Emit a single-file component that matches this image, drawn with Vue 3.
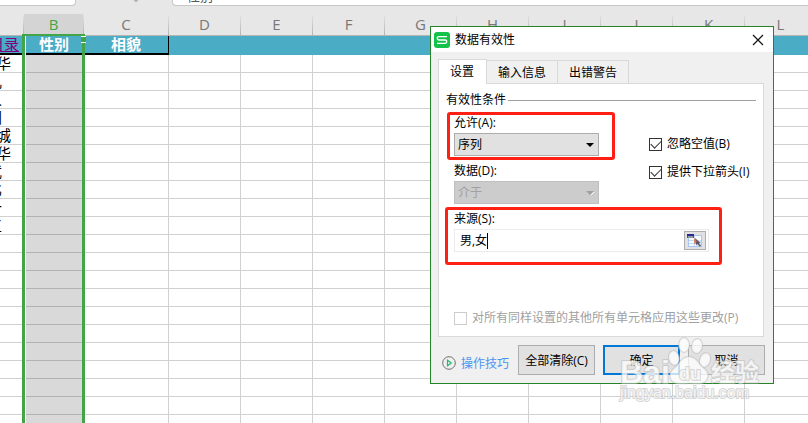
<script setup>
import { ref } from 'vue'

const columns = ['A', 'B', 'C', 'D', 'E', 'F', 'G', 'H', 'I', 'J', 'K', 'L', 'M', 'N', 'O', 'P']
const widths = { A: 24, B: 60, C: 85 }
const headings = { A: '目录', B: '性别', C: '相貌' }
const names = [
  { text: '华' }, { text: '儿', cut: true }, { text: '人', cut: true }, { text: '国', cut: true },
  { text: '城' }, { text: '华' }, { text: '武', cut: true }, { text: '比', cut: true },
  { text: '十', cut: true }, { text: '工', cut: true },
]
const rowCount = 60

const allow = ref('序列')
const operator = ref('介于')
const source = ref('男,女')
const ignoreBlank = ref(true)
const showArrow = ref(true)
const applyAll = ref(false)
</script>

<template>
  <main class="app">
    <div class="formula-bar">
      <div class="name-box"></div>
      <div class="knob"></div>
      <div class="formula">性别</div>
    </div>

    <div class="sheet">
      <table>
        <colgroup>
          <col v-for="c in columns" :key="c" :style="{ width: (widths[c] || 72) + 'px' }" />
        </colgroup>
        <thead>
          <tr>
            <th v-for="c in columns" :key="c" class="letter" :class="{ picked: c === 'B' }" scope="col">
              <span>{{ c === 'A' ? '' : c }}</span>
            </th>
          </tr>
        </thead>
        <tbody>
          <tr class="headings">
            <td v-for="c in columns" :key="c" :class="{ filled: headings[c], last: c === 'C' }">
              <div v-if="c === 'A'" class="name linked"><a href="#">{{ headings.A }}</a></div>
              <template v-else>{{ headings[c] }}</template>
            </td>
          </tr>
          <tr v-for="r in rowCount" :key="r" class="row">
            <td v-for="c in columns" :key="c" :class="{ shaded: c === 'B', first: c === 'A' }">
              <div v-if="c === 'A' && names[r - 1]" class="name" :class="{ cut: names[r - 1].cut }">
                <span>{{ names[r - 1].text }}</span>
              </div>
            </td>
          </tr>
        </tbody>
      </table>
      <div class="selection"></div>
      <div class="handle"></div>
    </div>

    <section class="dialog" role="dialog" aria-labelledby="dialog-title">
      <header class="title-bar">
        <svg class="logo" viewBox="0 0 16 16" aria-hidden="true">
          <rect width="16" height="16" rx="3" fill="#12c24a" />
          <path d="M13 4.700H5q-1.800 0-1.800 1.600T5 8h6q1.800 0 1.800 1.600T11 11.300H3" fill="none" stroke="#fff" stroke-width="1.300" />
        </svg>
        <h1 id="dialog-title">数据有效性</h1>
        <button class="close" type="button" aria-label="关闭">
          <svg viewBox="0 0 12 12"><path d="M1 1l10 10M11 1L1 11" stroke="#111" stroke-width="1.2" /></svg>
        </button>
      </header>

      <div class="tabs" role="tablist">
        <button class="tab active" type="button" role="tab" aria-selected="true">设置</button>
        <button class="tab" type="button" role="tab" aria-selected="false">输入信息</button>
        <button class="tab" type="button" role="tab" aria-selected="false">出错警告</button>
      </div>

      <div class="panel">
        <h2>有效性条件</h2>
        <div class="conditions">
          <div class="fields">
            <div class="field">
              <label for="allow">允许(A):</label>
              <div class="picker">
                <select id="allow" v-model="allow"><option>序列</option></select>
                <svg viewBox="0 0 8 4"><path d="M0 0h8L4 4z" fill="#000" /></svg>
              </div>
            </div>
            <div class="field">
              <label for="operator">数据(D):</label>
              <div class="picker">
                <select id="operator" v-model="operator" disabled><option>介于</option></select>
                <svg viewBox="0 0 8 4"><path d="M8.500 .5L5 4" stroke="#fff" /><path d="M0 0h8L4 4z" fill="#a0a0a0" /></svg>
              </div>
            </div>
          </div>
          <div class="options">
            <label class="check"><input v-model="ignoreBlank" type="checkbox" />忽略空值(B)</label>
            <label class="check"><input v-model="showArrow" type="checkbox" />提供下拉箭头(I)</label>
          </div>
        </div>
        <div class="field source">
          <label for="source">来源(S):</label>
          <div class="range">
            <input id="source" v-model="source" type="text" />
            <span class="caret"></span>
            <button type="button" aria-label="选择区域">
              <svg viewBox="0 0 16 14">
                <rect x="1.500" y="1.500" width="13" height="11" fill="#f8fbff" stroke="#a5c8f5" />
                <path d="M2 6.500h12M2 9.500h12M7.500 2v10" stroke="#c3d8f5" />
                <path d="M9 6h5v6H9z" fill="#cfdffa" />
                <rect x="0" y="0" width="7" height="4" fill="#555a70" />
                <rect x="0" y="0" width="7" height="2" fill="#252a90" />
                <path d="M1 3h5" stroke="#d8d8e0" />
                <path d="M8 4l5.500 5-1.700.3 2.200 2.500-1.200 1-2.200-2.800L9 11z" fill="#5d5563" />
                <path d="M7.200 4v6l2.600-2.500z" fill="#d5774a" />
              </svg>
            </button>
          </div>
        </div>
        <label class="check muted"><input v-model="applyAll" type="checkbox" disabled />对所有同样设置的其他所有单元格应用这些更改(P)</label>
      </div>

      <footer class="actions">
        <a class="tips" href="#">
          <svg viewBox="0 0 14 14" aria-hidden="true">
            <circle cx="7" cy="7" r="6.300" fill="none" stroke="#707070" />
            <path d="M5.500 4.200v5.600L9.300 7z" fill="none" stroke="#27b775" stroke-width="1.200" />
          </svg>
          操作技巧
        </a>
        <button class="push" type="button">全部清除(C)</button>
        <button class="push primary" type="button">确定</button>
        <button class="push" type="button">取消</button>
      </footer>

      <div class="mark mark-allow"></div>
      <div class="mark mark-source"></div>

      <svg class="watermark" viewBox="0 0 150 70" aria-hidden="true">
        <g fill="#fff" fill-opacity=".75" stroke="#bdbdbd" stroke-opacity=".6" stroke-width="2" stroke-linejoin="round" paint-order="stroke">
          <text x="3" y="47" font-size="32" font-weight="700">Bai</text>
          <ellipse cx="57" cy="22" rx="5" ry="7" transform="rotate(-12 57 22)" />
          <ellipse cx="67" cy="9" rx="5" ry="7" />
          <ellipse cx="80" cy="10" rx="5" ry="7" transform="rotate(8 80 10)" />
          <ellipse cx="88" cy="24" rx="5" ry="7" transform="rotate(18 88 24)" />
          <path d="M72 21c7 0 9 6 13 10 5 4 7 7 5 12-3 6-12 4-18 4s-15 2-18-4c-2-5 0-8 5-12 4-4 6-10 13-10z" />
          <text x="62" y="44" font-size="18" font-weight="700">du</text>
          <text x="94" y="45" font-size="24" font-weight="700">经验</text>
          <text x="3" y="62" font-size="16">jingyan.baidu.com</text>
        </g>
      </svg>
    </section>
  </main>
</template>

<style>
body {
  margin: 0;
}
</style>

<style scoped>
* {
  box-sizing: border-box;
}
.app {
  position: relative;
  display: flex;
  flex-direction: column;
  height: 100vh;
  overflow: hidden;
  background: #e7e7e7;
  color: #000;
  font-family: 'Open Sans', 'Noto Sans CJK SC', sans-serif;
  font-size: 12px;
}
button,
input,
select {
  margin: 0;
  font: inherit;
  color: inherit;
}

/* formula bar */
.formula-bar {
  display: flex;
  flex: none;
  height: 6px;
}
.name-box {
  width: 76px;
  background: #fff;
  border: solid #c8c8c8;
  border-width: 0 1px 1px 0;
  border-radius: 0 0 4px 0;
}
.knob {
  width: 4px;
  height: 2px;
  margin: 0 34px 0 58px;
  background: #b0b0b0;
  border-radius: 0 0 2px 2px;
}
.formula {
  display: flex;
  flex: 1;
  align-items: flex-end;
  padding: 0 0 1px 14px;
  overflow: hidden;
  background: #fff;
  border: solid #c8c8c8;
  border-width: 0 0 1px 1px;
  border-radius: 0 0 0 4px;
  color: #555;
  font-size: 13px;
  line-height: 16px;
}

/* sheet */
.sheet {
  position: relative;
  flex: 1;
  overflow: hidden;
}
table {
  table-layout: fixed;
  width: 1105px;
  border-collapse: separate;
  border-spacing: 0;
  font-size: 15px;
}
th,
td {
  padding: 0;
  text-align: center;
  overflow: hidden;
}
.letter {
  height: 30px;
  padding-top: 8px;
  border-bottom: 1px solid #b4b4b4;
  color: #777;
  font-weight: 400;
  line-height: 21px;
}
.letter span {
  display: block;
  height: 21px;
  border: solid;
  border-width: 0 1px 0 0;
  border-image: linear-gradient(#e7e7e7, #b0b0b0) 1;
}
.letter.picked {
  color: #43a547;
}
.picked span {
  background: #d4d4d4;
}
.headings td {
  height: 19px;
  background: #4bacc6;
  color: #fff;
  font-weight: 700;
  line-height: 17px;
}
.headings .filled {
  border-bottom: 2px solid #000;
}
.headings .last {
  border-right: 1px solid #000;
}
.row td {
  height: 18px;
  background: #fff;
  border: solid #d0d0d0;
  border-width: 0 1px 1px 0;
  line-height: 17px;
}
.row .first {
  border-right-color: #fff;
}
.row .shaded {
  background: #d9d9d9;
  border-color: #b2b2b2;
}
.name {
  display: flex;
  justify-content: flex-end;
  height: 17px;
  padding-right: 12px;
  overflow: hidden;
}
.name.cut {
  padding-right: 21px;
}
.name.linked {
  padding-right: 5px;
  font-weight: 400;
}
.name span,
.name a {
  flex: none;
}
.name a {
  color: #800080;
}
.selection {
  position: absolute;
  top: 28px;
  bottom: -4px;
  left: 22px;
  width: 63px;
  border: 3px solid #43a547;
  border-top-width: 2px;
  box-shadow: inset 1px 0 #fff;
}
.handle {
  position: absolute;
  top: 30px;
  left: 81px;
  width: 5px;
  height: 7px;
  background: #43a547;
  border: solid #fff;
  border-width: 1px 0;
}

/* dialog */
.dialog {
  position: absolute;
  top: 26px;
  left: 430px;
  width: 344px;
  background: #f0f0f0;
  border: 1px solid #27832b;
}
.title-bar {
  display: flex;
  align-items: center;
  gap: 5px;
  height: 25px;
  padding: 0 9px 0 3px;
  background: #fff;
}
.logo {
  width: 16px;
  height: 16px;
}
h1 {
  flex: 1;
  margin: 0;
  font-size: 12px;
  font-weight: 400;
  line-height: 24px;
}
.close {
  display: flex;
  padding: 0;
  background: none;
  border: 0;
}
.close svg {
  width: 12px;
  height: 12px;
}
.tabs {
  position: relative;
  display: flex;
  align-items: flex-end;
  margin: 7px 7px -1px;
}
.tab {
  height: 24px;
  padding: 0 11px;
  background: #f0f0f0;
  border: solid #d9d9d9;
  border-width: 1px 1px 1px 0;
  line-height: 24px;
}
.tab.active {
  height: 25px;
  padding: 0 12px 0 11px;
  background: #fff;
  border-width: 1px 1px 0;
}
.panel {
  margin: 0 9px 0 7px;
  padding: 7px 7px 10px;
  background: #fff;
  border: 1px solid #d9d9d9;
}
h2 {
  display: flex;
  align-items: center;
  gap: 2px;
  margin: 0 0 6px;
  font-size: 12px;
  font-weight: 400;
  line-height: 18px;
}
h2::after {
  flex: 1;
  height: 1px;
  background: #a0a0a0;
  content: '';
}
.conditions {
  display: grid;
  grid-template-columns: 145px 1fr;
  gap: 50px;
  margin: 0 0 7px 8px;
}
.fields,
.field {
  display: flex;
  flex-direction: column;
}
.fields {
  gap: 7px;
}
.field {
  gap: 2px;
  line-height: 16px;
}
.picker {
  display: grid;
  align-items: center;
}
.picker > * {
  grid-area: 1 / 1;
}
.picker svg {
  justify-self: end;
  width: 8px;
  height: 4px;
  margin-right: 5px;
  pointer-events: none;
}
select {
  width: 100%;
  height: 23px;
  padding: 0 3px;
  appearance: none;
  background: #e1e1e1;
  border: 1px solid #adadad;
  border-radius: 0;
}
select:disabled {
  background: #ccc;
  border-color: #bfbfbf;
  color: #a0a0a0;
  opacity: 1;
}
.options {
  display: flex;
  flex-direction: column;
  gap: 12px;
  padding-top: 21px;
}
.check {
  display: flex;
  align-items: center;
  gap: 5px;
  line-height: 16px;
  white-space: nowrap;
}
.check input {
  display: grid;
  flex: none;
  place-items: center;
  width: 13px;
  height: 13px;
  appearance: none;
  background: #fff;
  border: 1px solid #333;
}
.check input:checked::after {
  width: 9px;
  height: 5px;
  margin-bottom: 3px;
  border: solid #333;
  border-width: 0 0 1px 1px;
  transform: rotate(-45deg);
  content: '';
}
.check.muted {
  margin: 58px 0 0 8px;
  color: #a0a0a0;
}
.muted input {
  border-color: #ccc;
}
.source {
  margin-left: 8px;
}
.range {
  position: relative;
  display: flex;
  align-items: center;
  width: 255px;
  height: 23px;
  padding: 0 2px 0 5px;
  border: 1px solid #ececec;
}
.range input {
  flex: 1;
  min-width: 0;
  padding: 0;
  background: none;
  border: 0;
  outline: 0;
}
.caret {
  position: absolute;
  left: 32px;
  width: 1px;
  height: 16px;
  background: #000;
}
.range button {
  display: flex;
  align-items: center;
  justify-content: center;
  width: 22px;
  height: 19px;
  padding: 0;
  background: #e1e1e1;
  border: 1px solid #adadad;
}
.range button svg {
  width: 16px;
  height: 14px;
}
.actions {
  display: flex;
  gap: 8px;
  padding: 8px 8px 8px 11px;
}
.tips {
  display: flex;
  flex: 1;
  align-items: center;
  gap: 5px;
  padding-top: 6px;
  color: #4b94f2;
  text-decoration: none;
  white-space: nowrap;
}
.tips svg {
  width: 14px;
  height: 14px;
}
.push {
  width: 77px;
  height: 30px;
  padding: 0;
  background: #e1e1e1;
  border: 1px solid #adadad;
}
.push.primary {
  border: 2px solid #0078d7;
}

/* highlights and watermark over the window */
.mark {
  position: absolute;
  border: 3px solid #ff2015;
  border-radius: 3px;
  pointer-events: none;
}
.mark-allow {
  top: 85px;
  left: 16px;
  width: 168px;
  height: 48px;
}
.mark-source {
  top: 180px;
  left: 14px;
  width: 277px;
  height: 58px;
}
.watermark {
  position: absolute;
  top: 309px;
  left: 186px;
  width: 150px;
  height: 70px;
  overflow: visible;
  font-family: 'Liberation Sans', 'Noto Sans CJK SC', sans-serif;
  pointer-events: none;
}
</style>
